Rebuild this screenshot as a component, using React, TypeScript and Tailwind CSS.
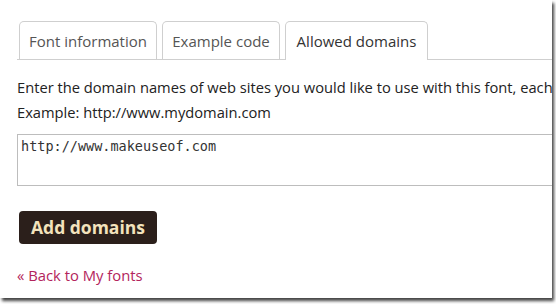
import React from "react";

export default function App() {
  const font = { fontFamily: '"Open Sans", "Noto Sans", sans-serif' };
  return (
    <div className="w-[556px] h-[304px] bg-white overflow-hidden" style={font}>
      <div className="w-[552px] h-[298px] bg-white shadow-[2px_3px_3px_#444] overflow-hidden relative">
        <div className="pt-[22px] pl-[17px]">
          <div className="flex items-end border-b border-[#cfcfcf] h-[38px] gap-[5px] pl-[2px]">
            <div className="h-[38px] w-[138px] border border-b-0 border-[#cfcfcf] rounded-t-[5px] flex items-center justify-center pt-[1px] text-[15px] text-[#555]">
              Font information
            </div>
            <div className="h-[38px] w-[118px] border border-b-0 border-[#cfcfcf] rounded-t-[5px] flex items-center justify-center pt-[1px] text-[15px] text-[#555]">
              Example code
            </div>
            <div className="h-[39px] w-[143px] border border-b-0 border-[#cfcfcf] rounded-t-[5px] flex items-center justify-center pt-[1px] text-[15px] text-[#333] bg-white -mb-px">
              Allowed domains
            </div>
          </div>
          <div className="mt-[15px] text-[14.7px] leading-[25px] text-[#222] whitespace-nowrap">
            Enter the domain names of web sites you would like to use with this font, each
          </div>
          <div className="text-[14.7px] leading-[25px] text-[#222] whitespace-nowrap">
            Example: http://www.mydomain.com
          </div>
          <div
            className="mt-[9px] h-[52px] w-[560px] border border-[#bdbdbd] px-[3px] pt-[1px] text-[13.5px] text-[#333]"
            style={{ fontFamily: '"DejaVu Sans Mono", monospace' }}
          >
            http://www.makeuseof.com
          </div>
          <div className="mt-[25px] ml-[2px] w-[138px] h-[33px] bg-[#2b1f1b] rounded-[4px] flex items-center justify-center text-[17.5px] font-bold text-[#f3e3bd]">
            Add domains
          </div>
          <div className="mt-[20px] text-[14.8px] text-[#b3245c]">« Back to My fonts</div>
        </div>
      </div>
    </div>
  );
}
